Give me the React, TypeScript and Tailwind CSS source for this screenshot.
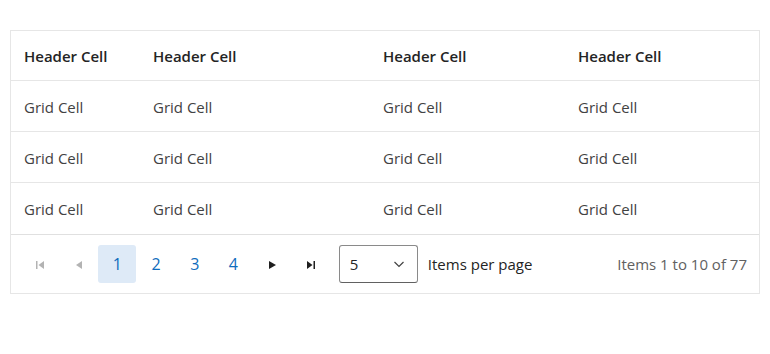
import React from "react";

const cols = "grid grid-cols-[129px_230px_195px_1fr]";

function Row({ header = false, last = false }: { header?: boolean; last?: boolean }) {
  const label = header ? "Header Cell" : "Grid Cell";
  return (
    <div
      className={`${cols} ${header ? "h-[50px] font-semibold text-[#242424]" : "h-[51px] text-[#424242]"} ${last ? "" : "border-b border-[#e6e6e6]"} items-center`}
    >
      {[0, 1, 2, 3].map((i) => (
        <div key={i} className="pl-[13px] pt-[2px]">
          {label}
        </div>
      ))}
    </div>
  );
}

function PagerBtn({ children, active = false, num = false }: { children: React.ReactNode; active?: boolean; num?: boolean }) {
  return (
    <div
      className={`w-[38px] h-[38px] flex items-center justify-center rounded-[3px] ${active ? "bg-[#deeaf7]" : ""} ${num ? "text-[#0f6cbd] text-[16px] font-medium" : ""}`}
    >
      {children}
    </div>
  );
}

export default function App() {
  return (
    <div className="w-[770px] h-[354px] bg-white pt-[30px] pl-[10px]" style={{ fontFamily: '"Open Sans", "Noto Sans", sans-serif' }}>
      <div className="w-[750px] border border-[#e6e6e6] text-[15px]">
        <Row header />
        <Row />
        <Row />
        <Row last />
        <div className="h-[59px] border-t border-[#e0e0e0] flex items-center pl-[10px] pr-[12px]">
          <div className="flex items-center gap-[0.7px]">
            <PagerBtn>
              <svg width="8" height="8" viewBox="0 0 8 8" className="mt-[2px]"><rect x="0" y="0" width="1.5" height="8" fill="#b3b3b3" /><path d="M8 0 L2.5 4 L8 8 Z" fill="#b3b3b3" /></svg>
            </PagerBtn>
            <PagerBtn>
              <svg width="6" height="8" viewBox="0 0 6 8" className="mt-[2px]"><path d="M6 0 L0 4 L6 8 Z" fill="#b3b3b3" /></svg>
            </PagerBtn>
            <PagerBtn active num>1</PagerBtn>
            <PagerBtn num>2</PagerBtn>
            <PagerBtn num>3</PagerBtn>
            <PagerBtn num>4</PagerBtn>
            <PagerBtn>
              <svg width="7" height="8" viewBox="0 0 7 8" className="mt-[2px]"><path d="M0 0 L7 4 L0 8 Z" fill="#1f1f1f" /></svg>
            </PagerBtn>
            <PagerBtn>
              <svg width="8" height="8" viewBox="0 0 8 8" className="mt-[2px]"><path d="M0 0 L5.5 4 L0 8 Z" fill="#1f1f1f" /><rect x="6.5" y="0" width="1.5" height="8" fill="#1f1f1f" /></svg>
            </PagerBtn>
          </div>
          <div className="ml-[9px] w-[79px] h-[38px] border border-[#8a8a8a] border-b-[#616161] rounded-[3px] flex items-center justify-between pl-[10px] pr-[12px] text-[#242424]">
            <span>5</span>
            <svg width="12" height="12" viewBox="0 0 12 12"><path d="M1.5 4 L6 8.5 L10.5 4" fill="none" stroke="#424242" strokeWidth="1.2" /></svg>
          </div>
          <span className="ml-[10px] text-[#242424]">Items per page</span>
          <span className="ml-auto text-[#616161]">Items 1 to 10 of 77</span>
        </div>
      </div>
    </div>
  );
}
